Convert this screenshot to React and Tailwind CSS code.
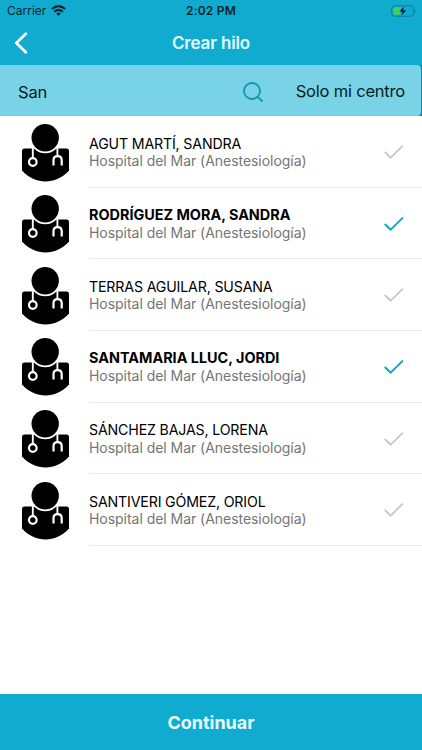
const DOCTORS = [
  { name: "AGUT MARTÍ, SANDRA", selected: false },
  { name: "RODRÍGUEZ MORA, SANDRA", selected: true },
  { name: "TERRAS AGUILAR, SUSANA", selected: false },
  { name: "SANTAMARIA LLUC, JORDI", selected: true },
  { name: "SÁNCHEZ BAJAS, LORENA", selected: false },
  { name: "SANTIVERI GÓMEZ, ORIOL", selected: false },
];

function DoctorIcon() {
  return (
    <svg viewBox="0 0 47 58" className="w-[47px] h-[58px] shrink-0" fill="none">
      <path
        d="M2.5 24.5H44.5Q47 24.5 47 27V46.5C40 54 32 57.5 23.5 57.5S7 54 0 46.5V27Q0 24.5 2.5 24.5Z"
        fill="#000"
      />
      <circle cx="23.2" cy="13.8" r="15.5" fill="#fff" />
      <circle cx="23.2" cy="13.8" r="13.7" fill="#000" />
      <g stroke="#fff" strokeWidth="1.9">
        <path d="M10.8 23V34M35.4 23V32" />
        <circle cx="10.8" cy="38" r="3.8" strokeWidth="2.2" />
        <path d="M31.5 41.5V36.2Q31.5 32.2 35.6 32.2T39.7 36.2V41.5" strokeWidth="2.2" />
      </g>
    </svg>
  );
}

function Check({ selected }) {
  return (
    <svg
      viewBox="0 0 20 14"
      className={`w-5 h-3.5 shrink-0 ${selected ? "text-[#12a0c4]" : "text-[#c9c9c9]"}`}
      fill="none"
      stroke="currentColor"
      strokeWidth="1.9"
      strokeLinecap="round"
      strokeLinejoin="round"
    >
      <path d="M1.3 7.5L6.7 12.7L18.4 1.1" />
    </svg>
  );
}

function DoctorRow({ doctor }) {
  return (
    <li className="flex h-[71.67px] pl-[22px]">
      <div className="pt-[7.5px]">
        <DoctorIcon />
      </div>
      <div className="flex-1 flex justify-between ml-5 pr-[18px] border-b border-[#e9e9e9]">
        <div className="pt-[18.5px] whitespace-nowrap">
          <div
            className={`text-black leading-[17.5px] ${
              doctor.selected
                ? "text-[14.4px] font-bold"
                : "text-[14.2px] font-normal tracking-[-0.17px]"
            }`}
          >
            {doctor.name}
          </div>
          <div className="text-[14px] leading-[17px] tracking-[-0.04px] text-[#757575]">
            Hospital del Mar (Anestesiología)
          </div>
        </div>
        <div className="pt-[29px]">
          <Check selected={doctor.selected} />
        </div>
      </div>
    </li>
  );
}

function StatusBar() {
  return (
    <div className="grid grid-cols-3 items-center h-[22px] px-[7px] text-[#06242c]">
      <div className="flex items-center gap-[5px] text-[12px]">
        Carrier
        <svg viewBox="0 0 15 11" className="w-[15px] h-[11px] -mt-px" fill="none" stroke="currentColor">
          <path d="M.8 4Q7.5 -1.6 14.2 4" strokeWidth="2.1" />
          <path d="M3.2 6.7Q7.5 3.1 11.8 6.7" strokeWidth="2" />
          <path d="M7.5 10.8L5.1 8.5Q7.5 6.6 9.9 8.5Z" fill="currentColor" stroke="none" />
        </svg>
      </div>
      <div className="text-center text-[12px] font-semibold tracking-[0.2px]">2:02 PM</div>
      <div className="flex justify-end -mr-[2px]">
        <svg viewBox="0 0 26 12" className="w-[26px] h-3" fill="none">
          <rect x=".8" y=".8" width="22" height="10.4" rx="3" stroke="#0b7d96" />
          <path d="M4 2.3H9.2V9.7H4Q2.3 9.7 2.3 8V4Q2.3 2.3 4 2.3Z" fill="#42cf60" />
          <path d="M24.2 4.2Q25.8 6 24.2 7.8Z" fill="#0b7d96" />
          <path
            d="M13.3 1L8.4 6.7H11.5L10.2 11L15.2 5.2H12.1Z"
            fill="#000"
            stroke="#11abd0"
            strokeWidth=".4"
          />
        </svg>
      </div>
    </div>
  );
}

export default function App() {
  return (
    <div className="flex flex-col h-[750px] bg-white font-['Inter','Liberation_Sans',sans-serif]">
      <header className="h-[65px] shrink-0 bg-[#11abd0]">
        <StatusBar />
        <div className="grid grid-cols-3 items-center h-[43px] px-[14px]">
          <button className="w-4 -mt-px" aria-label="Atrás">
            <svg
              viewBox="0 0 14 22"
              className="w-3.5 h-[22px]"
              fill="none"
              stroke="#fff"
              strokeWidth="2.8"
              strokeLinecap="round"
              strokeLinejoin="round"
            >
              <path d="M11.8 1.8L2.3 11L11.8 20.2" />
            </svg>
          </button>
          <h1 className="text-center text-[17px] font-semibold tracking-[-0.15px] text-[#e2fbff] whitespace-nowrap">
            Crear hilo
          </h1>
        </div>
      </header>

      {/* Search */}
      <div className="h-[51px] shrink-0 flex bg-[#1877d3]">
        <div className="w-[421px] flex items-center justify-between bg-[#78d3e6] rounded-r-[4px] pl-[18px] pr-4 text-[16.5px] text-[#071c20]">
          <div className="flex-1 pt-[3px] tracking-[-0.2px]">San</div>
          <svg
            viewBox="0 0 20 20"
            className="w-5 h-5 mt-[3px] mr-[33px]"
            fill="none"
            stroke="#1298b3"
            strokeWidth="1.9"
            strokeLinecap="round"
          >
            <circle cx="9" cy="9" r="8" />
            <path d="M14.8 14.8L19 19" />
          </svg>
          <div className="whitespace-nowrap pt-[2px] tracking-[-0.2px]">Solo mi centro</div>
        </div>
      </div>

      <ul className="flex-1">
        {DOCTORS.map((doctor) => (
          <DoctorRow key={doctor.name} doctor={doctor} />
        ))}
      </ul>

      <button className="h-14 shrink-0 bg-[#11abd0] text-[18px] font-bold text-[#e9fcff]">
        Continuar
      </button>
    </div>
  );
}
